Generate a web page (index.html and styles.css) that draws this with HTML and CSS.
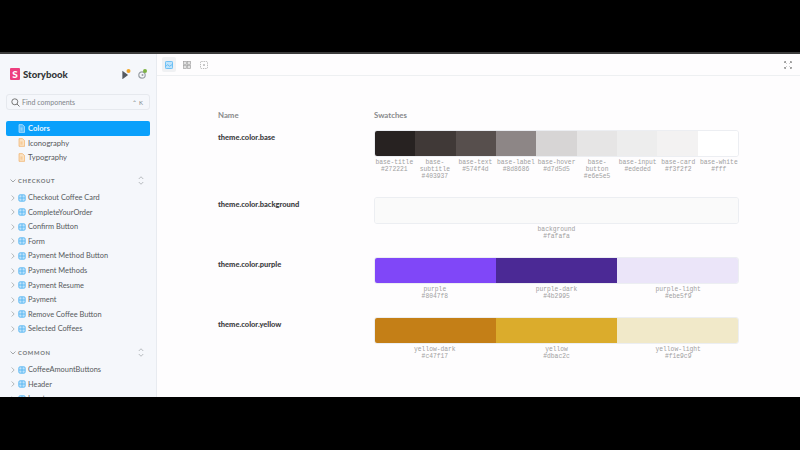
FILE: index.html
```html
<!DOCTYPE html>
<html lang="en">

<head>
    <meta charset="UTF-8">
    <title>Storybook</title>
    <link rel="stylesheet" href="styles.css">
</head>

<body>
    <svg width="0" height="0" class="defs">
        <symbol id="grid" viewBox="0 0 10 10">
            <rect x="1" y="1" width="8" height="8" rx="1.500" fill="#bfe3fb" stroke="#4db2f2" stroke-width="1"></rect>
            <path d="M5 1v8M1 5h8" stroke="#4db2f2" stroke-width="1"></path>
        </symbol>
        <symbol id="arrow" viewBox="0 0 6 8">
            <path d="M2 1l3 3-3 3" fill="none" stroke="#a2a7ab" stroke-width="1"></path>
        </symbol>
        <symbol id="down" viewBox="0 0 6 6">
            <path d="M.5 1.500l2.500 2.500 2.500-2.500" fill="none" stroke="#a2a7ab" stroke-width="1"></path>
        </symbol>
        <symbol id="doc" viewBox="0 0 10 12">
            <path d="M1.500 .5h5l3 3v8h-8z" fill="#fbe3c4" stroke="#f0ad62" stroke-width="1"></path>
            <path d="M3.500 5.500h3M3.500 8h3" stroke="#f0ad62" stroke-width="1"></path>
        </symbol>
        <symbol id="doc-on" viewBox="0 0 10 12">
            <path d="M1.500 .5h5l3 3v8h-8z" fill="#55bdfc" stroke="#d5eefe" stroke-width="1"></path>
            <path d="M3.500 5.500h3M3.500 8h3" stroke="#d5eefe" stroke-width="1"></path>
        </symbol>
        <symbol id="updown" viewBox="0 0 8 14">
            <path d="M1 5l3-3 3 3M1 9l3 3 3-3" fill="none" stroke="#a2a7ab" stroke-width="1"></path>
        </symbol>
    </svg>

    <div class="app">
        <aside class="sidebar">
            <div class="brand">
                <span class="logo">S</span>
                <b class="brand-name">Storybook</b>
                <span class="brand-icons">
                    <svg width="9" height="10" viewBox="0 0 9 10">
                        <path d="M1 3v6l4-3z" fill="#555a60" stroke="#555a60" stroke-width="1.300"></path>
                        <circle cx="6.500" cy="2" r="2" fill="#f0a72c"></circle>
                    </svg>
                    <svg width="9" height="10" viewBox="0 0 9 10">
                        <circle cx="4" cy="6" r="3.200" fill="none" stroke="#9aa0a6" stroke-width="1.200"></circle>
                        <circle cx="4.500" cy="6" r="1" fill="#9aa0a6"></circle>
                        <circle cx="7" cy="2" r="2" fill="#7cb342"></circle>
                    </svg>
                </span>
            </div>

            <div class="search">
                <svg width="9" height="9" viewBox="0 0 9 9">
                    <circle cx="3.800" cy="3.800" r="3" fill="none" stroke="#777" stroke-width="1"></circle>
                    <path d="M6 6l2.500 2.500" stroke="#777" stroke-width="1"></path>
                </svg>
                <span class="search-text">Find components</span>
                <span class="search-key">⌃ K</span>
            </div>

            <ul class="docs">
                <li class="doc-item active">
                    <svg width="7" height="9"><use href="#doc-on"></use></svg>
                    Colors
                </li>
                <li class="doc-item">
                    <svg width="7" height="9"><use href="#doc"></use></svg>
                    Iconography
                </li>
                <li class="doc-item">
                    <svg width="7" height="9"><use href="#doc"></use></svg>
                    Typography
                </li>
            </ul>

            <div class="group-head">
                <svg width="6" height="6"><use href="#down"></use></svg>
                <span class="group-name">CHECKOUT</span>
                <svg width="6" height="11"><use href="#updown"></use></svg>
            </div>
            <ul class="tree">
                <li class="tree-item"><svg width="5" height="8"><use href="#arrow"></use></svg><svg width="8" height="8"><use href="#grid"></use></svg>Checkout Coffee Card</li>
                <li class="tree-item"><svg width="5" height="8"><use href="#arrow"></use></svg><svg width="8" height="8"><use href="#grid"></use></svg>CompleteYourOrder</li>
                <li class="tree-item"><svg width="5" height="8"><use href="#arrow"></use></svg><svg width="8" height="8"><use href="#grid"></use></svg>Confirm Button</li>
                <li class="tree-item"><svg width="5" height="8"><use href="#arrow"></use></svg><svg width="8" height="8"><use href="#grid"></use></svg>Form</li>
                <li class="tree-item"><svg width="5" height="8"><use href="#arrow"></use></svg><svg width="8" height="8"><use href="#grid"></use></svg>Payment Method Button</li>
                <li class="tree-item"><svg width="5" height="8"><use href="#arrow"></use></svg><svg width="8" height="8"><use href="#grid"></use></svg>Payment Methods</li>
                <li class="tree-item"><svg width="5" height="8"><use href="#arrow"></use></svg><svg width="8" height="8"><use href="#grid"></use></svg>Payment Resume</li>
                <li class="tree-item"><svg width="5" height="8"><use href="#arrow"></use></svg><svg width="8" height="8"><use href="#grid"></use></svg>Payment</li>
                <li class="tree-item"><svg width="5" height="8"><use href="#arrow"></use></svg><svg width="8" height="8"><use href="#grid"></use></svg>Remove Coffee Button</li>
                <li class="tree-item"><svg width="5" height="8"><use href="#arrow"></use></svg><svg width="8" height="8"><use href="#grid"></use></svg>Selected Coffees</li>
            </ul>

            <div class="group-head common">
                <svg width="6" height="6"><use href="#down"></use></svg>
                <span class="group-name">COMMON</span>
                <svg width="6" height="11"><use href="#updown"></use></svg>
            </div>
            <ul class="tree">
                <li class="tree-item"><svg width="5" height="8"><use href="#arrow"></use></svg><svg width="8" height="8"><use href="#grid"></use></svg>CoffeeAmountButtons</li>
                <li class="tree-item"><svg width="5" height="8"><use href="#arrow"></use></svg><svg width="8" height="8"><use href="#grid"></use></svg>Header</li>
                <li class="tree-item"><svg width="5" height="8"><use href="#arrow"></use></svg><svg width="8" height="8"><use href="#grid"></use></svg>Input</li>
            </ul>
        </aside>

        <main class="main">
            <div class="toolbar">
                <span class="tool on">
                    <svg width="8" height="8" viewBox="0 0 9 9">
                        <rect x=".5" y=".5" width="8" height="8" rx="1" fill="#bfe3fb" stroke="#5ab8f4"></rect>
                        <path d="M1 6l2-2 2 2 3-2" fill="none" stroke="#5ab8f4"></path>
                    </svg>
                </span>
                <span class="tool">
                    <svg width="8" height="8" viewBox="0 0 9 9" fill="#e2e2e2" stroke="#a3a3a3" stroke-width=".8">
                        <rect x=".5" y=".5" width="3.300" height="3.300"></rect>
                        <rect x="5.200" y=".5" width="3.300" height="3.300"></rect>
                        <rect x=".5" y="5.200" width="3.300" height="3.300"></rect>
                        <rect x="5.200" y="5.200" width="3.300" height="3.300"></rect>
                    </svg>
                </span>
                <span class="tool">
                    <svg width="8" height="8" viewBox="0 0 9 9" fill="none" stroke="#a3a3a3" stroke-width=".9">
                        <rect x=".5" y=".5" width="8" height="8" rx="1" stroke-dasharray="1.500 1"></rect>
                        <path d="M4.500 3.500v2M3.500 4.500h2"></path>
                    </svg>
                </span>
                <span class="tool expand">
                    <svg width="8" height="8" viewBox="0 0 8 8" fill="none" stroke="#a0a0a0" stroke-width="1">
                        <path d="M.5 2v-1.500h1.500M6 .5h1.500v1.500M7.500 6v1.500h-1.500M2 7.500h-1.500v-1.500M1 1l1.500 1.500M7 1l-1.500 1.500M7 7l-1.500-1.500M1 7l1.500-1.500"></path>
                    </svg>
                </span>
            </div>

            <div class="content">
                <div class="head-row">
                    <span class="col-name">Name</span>
                    <span>Swatches</span>
                </div>

                <div class="color-row">
                    <b class="col-name">theme.color.base</b>
                    <div class="swatches">
                        <div class="bar">
                            <i class="c1"></i><i class="c2"></i><i class="c3"></i><i class="c4"></i><i class="c5"></i><i class="c6"></i><i class="c7"></i><i class="c8"></i><i class="c9"></i>
                        </div>
                        <div class="labels">
                            <span>base-title<br>#272221</span>
                            <span>base-subtitle<br>#403937</span>
                            <span>base-text<br>#574f4d</span>
                            <span>base-label<br>#8d8686</span>
                            <span>base-hover<br>#d7d5d5</span>
                            <span>base-button<br>#e6e5e5</span>
                            <span>base-input<br>#ededed</span>
                            <span>base-card<br>#f3f2f2</span>
                            <span>base-white<br>#fff</span>
                        </div>
                    </div>
                </div>

                <div class="color-row">
                    <b class="col-name">theme.color.background</b>
                    <div class="swatches">
                        <div class="bar"><i class="bg"></i></div>
                        <div class="labels">
                            <span>background<br>#fafafa</span>
                        </div>
                    </div>
                </div>

                <div class="color-row">
                    <b class="col-name">theme.color.purple</b>
                    <div class="swatches">
                        <div class="bar">
                            <i class="p1"></i><i class="p2"></i><i class="p3"></i>
                        </div>
                        <div class="labels">
                            <span>purple<br>#8047f8</span>
                            <span>purple-dark<br>#4b2995</span>
                            <span>purple-light<br>#ebe5f9</span>
                        </div>
                    </div>
                </div>

                <div class="color-row">
                    <b class="col-name">theme.color.yellow</b>
                    <div class="swatches">
                        <div class="bar">
                            <i class="y1"></i><i class="y2"></i><i class="y3"></i>
                        </div>
                        <div class="labels">
                            <span>yellow-dark<br>#c47f17</span>
                            <span>yellow<br>#dbac2c</span>
                            <span>yellow-light<br>#f1e9c9</span>
                        </div>
                    </div>
                </div>
            </div>
        </main>
    </div>
</body>

</html>
```

FILE: styles.css
```css
* {
    box-sizing: border-box;
}

body {
    margin: 0;
    height: 450px;
    overflow: hidden;
    padding-top: 52px;
    background-color: #000;
    font-family: "Lato", "Open Sans", sans-serif;
}

ul {
    list-style: none;
    margin: 0;
    padding: 0;
}

.defs {
    display: block;
    height: 0;
}

.app {
    height: 345px;
    display: flex;
    overflow: hidden;
    border-top: 2px solid #3c3c3c;
    background-color: #fefdfe;
}

.sidebar {
    width: 157px;
    flex-shrink: 0;
    padding: 0 6px;
    overflow: hidden;
    background-color: #f5f7fb;
    border-right: 1px solid #e8ebf0;
}

.brand {
    height: 40px;
    padding: 0 3px 0 4px;
    display: flex;
    align-items: center;
}

.logo {
    width: 10px;
    height: 12px;
    border-radius: 1px;
    margin-right: 3px;
    background-color: #ed3f7f;
    color: #fff;
    font-size: 10px;
    font-weight: 900;
    line-height: 12px;
    text-align: center;
}

.brand-name {
    font-size: 9.600px;
    font-weight: 900;
    color: #333638;
}

.brand-icons {
    margin-left: auto;
    display: flex;
    gap: 7px;
}

.search {
    height: 16px;
    padding: 0 6px 0 4px;
    display: flex;
    align-items: center;
    gap: 2px;
    border: 1px solid #e6e9ee;
    border-radius: 3px;
    font-size: 7px;
    color: #80858a;
}

.search-key {
    margin-left: auto;
    font-size: 6px;
}

.docs {
    margin-top: 11px;
}

.doc-item {
    height: 14.600px;
    padding-left: 12px;
    display: flex;
    align-items: center;
    gap: 3px;
    font-size: 7.600px;
    color: #56595c;
}

.active {
    background-color: #0aa0fb;
    border-radius: 2px;
    color: #e8f6ff;
    font-weight: 700;
}

.group-head {
    height: 12px;
    margin-top: 10px;
    padding: 0 6px 0 4px;
    display: flex;
    align-items: center;
    justify-content: space-between;
}

.common {
    margin-top: 10.500px;
}

.group-name {
    margin-left: 2px;
    margin-right: auto;
    font-size: 5.800px;
    font-weight: 700;
    letter-spacing: .7px;
    color: #74777a;
}

.tree {
    margin-top: 3.500px;
}

.tree-item {
    height: 14.600px;
    padding-left: 4px;
    display: flex;
    align-items: center;
    font-size: 7.400px;
    color: #56595c;
    white-space: nowrap;
}

.tree-item svg:first-child {
    margin-right: 3px;
}

.tree-item svg:nth-child(2) {
    margin-right: 2px;
}

.main {
    flex: 1;
    min-width: 0;
}

.toolbar {
    height: 22px;
    padding-left: 5px;
    padding-right: 5px;
    display: flex;
    align-items: center;
    gap: 3.600px;
    border-bottom: 1px solid #eef0f2;
}

.tool {
    width: 14px;
    height: 15px;
    display: flex;
    align-items: center;
    justify-content: center;
    border-radius: 2px;
}

.on {
    background-color: #f0f1f3;
}

.expand {
    margin-left: auto;
}

.content {
    padding: 33px 61px 0 61px;
    font-size: 7.800px;
    color: #6f7478;
}

.head-row {
    display: flex;
    height: 12px;
    line-height: 12px;
    font-weight: 700;
    color: #88898b;
}

.col-name {
    width: 156px;
    flex-shrink: 0;
}

.color-row {
    display: flex;
    height: 60px;
}

.head-row + .color-row {
    margin-top: 9px;
    height: 67px;
}

.color-row b {
    padding-top: 2px;
    line-height: 12px;
    font-size: 7.500px;
    color: #3c3c3e;
    font-weight: 900;
}

.swatches {
    width: 365px;
}

.bar {
    height: 27px;
    display: flex;
    overflow: hidden;
    border: 1px solid #eceef2;
    border-radius: 3px;
}

.bar i {
    flex: 1;
}

.labels {
    display: flex;
    padding-top: 1.500px;
    font-family: "Liberation Mono", monospace;
    font-size: 6.300px;
    line-height: 7.400px;
    color: #a0a0a0;
    text-align: center;
}

.labels span {
    flex: 1 1 0;
    min-width: 0;
}

.c1 { background-color: #272221; }
.c2 { background-color: #403937; }
.c3 { background-color: #574f4d; }
.c4 { background-color: #8d8686; }
.c5 { background-color: #d7d5d5; }
.c6 { background-color: #e6e5e5; }
.c7 { background-color: #ededed; }
.c8 { background-color: #f3f2f2; }
.c9 { background-color: #fff; }
.bg { background-color: #fafafa; }
.p1 { background-color: #8047f8; }
.p2 { background-color: #4b2995; }
.p3 { background-color: #ebe5f9; }
.y1 { background-color: #c47f17; }
.y2 { background-color: #dbac2c; }
.y3 { background-color: #f1e9c9; }
```
